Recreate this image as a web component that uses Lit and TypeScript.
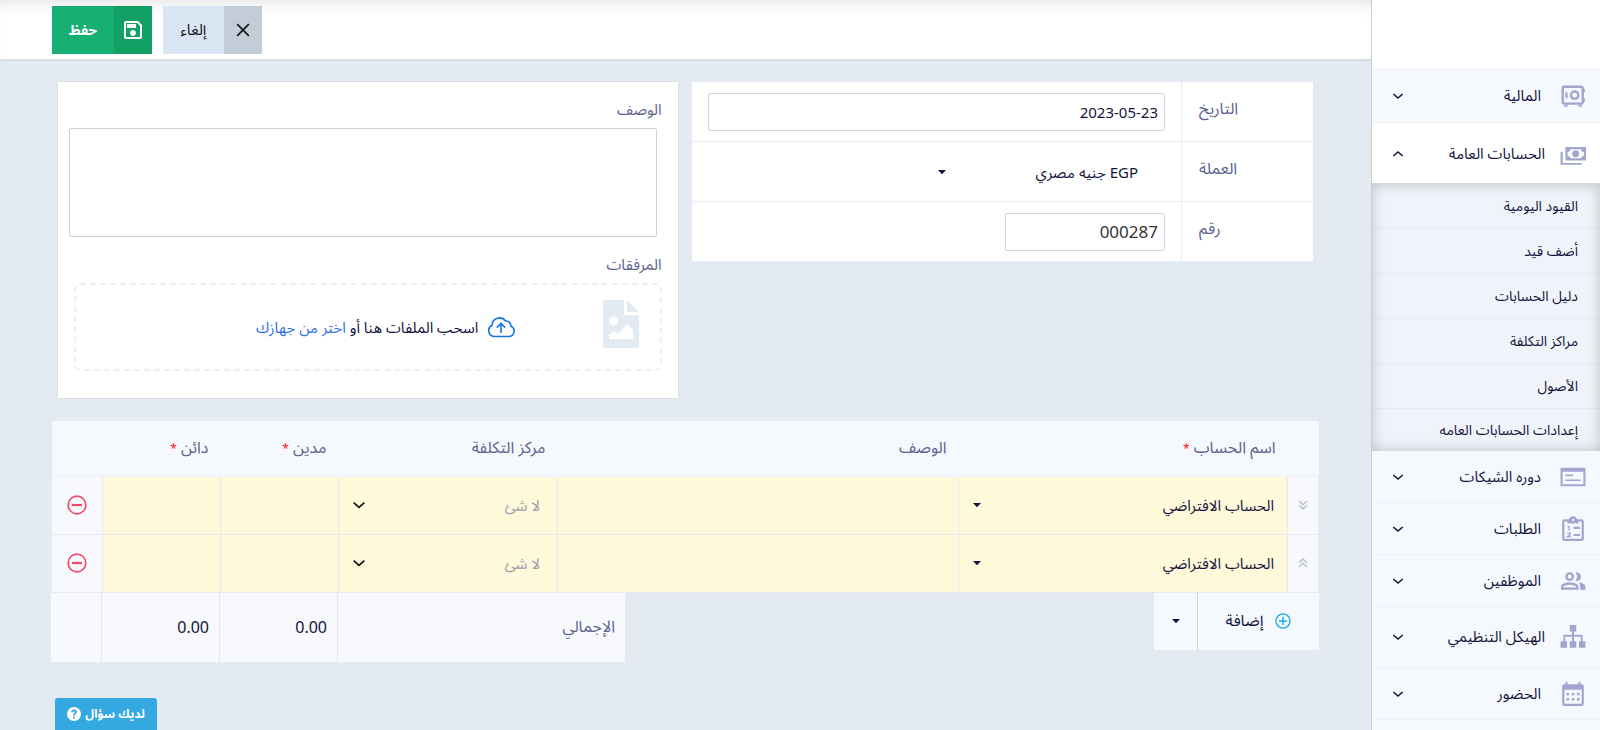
import { LitElement, html, css, svg } from "lit";
import { customElement } from "lit/decorators.js";
import { classMap } from "lit/directives/class-map.js";

const stroke = (d: string, w = 2) => svg`<path d=${d} fill="none" stroke="currentColor" stroke-width=${w}></path>`;
const fill = (d: string) => svg`<path d=${d} fill="currentColor" fill-rule="evenodd"></path>`;

const icons = {
  safe: svg`<rect x="2.5" y="3.5" width="18.5" height="15.5" rx="1.5" fill="none" stroke="currentColor" stroke-width="2.2"></rect>
    <circle cx="13.5" cy="11.3" r="3.4" fill="none" stroke="currentColor" stroke-width="2.2"></circle>
    ${fill("M5 8.5h2v5.500h-2zM4 20h3v2H4zM17 20h3v2h-3zM21.500 5.500h1.500v3h-1.500zM21.500 14h1.500v3h-1.500z")}`,
  cash: fill("M5 5.500H24V18H5V5.500M14.500 8.500A3.200 3.200 0 0 1 14.500 15A3.200 3.200 0 0 1 14.500 8.500M9.500 7.500A2 2 0 0 1 7 10V14A2 2 0 0 1 9.500 16H19.500A2 2 0 0 1 22 14V10A2 2 0 0 1 19.500 7.500H9.500M.5 10H2.500V20.200H20V22H.5V10Z"),
  cheque: fill("M.5 3.500H23.500V20.500H.5V3.500M2.400 7.200V18.600H21.600V7.200H2.400M5 9.600h7v1.800H5zM5 14.200h14v1.400H5z"),
  clipboard: svg`${fill("M4 3H8.200A4 4 0 0 1 15.800 3H20A2 2 0 0 1 22 5V21A2 2 0 0 1 20 23H4A2 2 0 0 1 2 21V5A2 2 0 0 1 4 3M4 5V21H20V5H17V7H7V5H4M12 2.600A1 1 0 0 0 12 4.600A1 1 0 0 0 12 2.600M12.500 10h6v2h-6zM12.500 16.500h6v2h-6z")}
    ${stroke("M7 9.800H8.500V13.500M6.600 15.800H9.500V17.200L7 19H10", 1.2)}`,
  people: svg`<circle cx="9" cy="8" r="3" fill="none" stroke="currentColor" stroke-width="2.2"></circle>
    ${stroke("M2 19V17.600C2 15.400 6 14.300 9 14.300S16 15.400 16 17.600V19Z", 2.2)}
    ${fill("M14.200 4.200A4 4 0 1 1 14.200 11.800A6 6 0 0 0 14.200 4.200M17.300 13.200C20 13.700 23.500 14.900 23.500 17.300V20H18.600V17.400C18.600 15.600 18.200 14.400 17.300 13.200")}`,
  sitemap: fill("M9 1H15V7H12.900V10H20.900V16H23.500V22H17.500V16H19.200V11.700H12.900V16H15V22H9V16H11.100V11.700H4.800V16H6.500V22H.5V16H3.100V10H11.100V7H9Z"),
  calendar: fill("M5 1H7V3H17V1H19V3H20A2 2 0 0 1 22 5V21A2 2 0 0 1 20 23H4A2 2 0 0 1 2 21V5A2 2 0 0 1 4 3H5ZM4 8V21H20V8ZM6 11h2.400v2.200H6zM10.800 11h2.400v2.200h-2.400zM15.600 11H18v2.200h-2.400zM6 15.800h2.400V18H6zM10.800 15.800h2.400V18h-2.400zM15.600 15.800H18V18h-2.400z"),
  save: fill("M17 3H5C3.890 3 3 3.900 3 5V19C3 20.100 3.890 21 5 21H19C20.100 21 21 20.100 21 19V7L17 3M19 19H5V5H16.170L19 7.830V19M12 12C10.340 12 9 13.340 9 15S10.340 18 12 18 15 16.660 15 15 13.660 12 12 12M6 6H15V10H6V6Z"),
  close: stroke("M5 5L19 19M19 5L5 19", 1.9),
  down: stroke("M4 8.500L12 15.500L20 8.500", 2.6),
  up: stroke("M4 15.500L12 8.500L20 15.500", 2.4),
  caret: fill("M4 8H20L12 16.500Z"),
  twoDown: stroke("M4 4L12 11.500L20 4M4 12.500L12 20L20 12.500", 2.8),
  twoUp: stroke("M4 11.500L12 4L20 11.500M4 20L12 12.500L20 20", 2.8),
  minus: svg`<circle cx="12" cy="12" r="10.6" fill="none" stroke="currentColor" stroke-width="2"></circle>${stroke("M6 12H18", 2.6)}`,
  plus: svg`<circle cx="12" cy="12" r="10.6" fill="none" stroke="currentColor" stroke-width="2"></circle>${stroke("M6 12H18M12 6V18", 2.2)}`,
  help: fill("M12 0A12 12 0 1 0 12 24A12 12 0 1 0 12 0ZM10.400 16.600H13.600V19.800H10.400ZM7 8.800C7.200 6 9 4.400 12 4.400C15 4.400 17 6 17 8.700C17 11.600 13.800 11.800 13.600 14.800H10.400C10.400 11 13.600 10.800 13.600 8.900C13.600 7.800 13 7.200 12 7.200C10.900 7.200 10.300 7.900 10.200 9.200Z"),
};

const icon = (name: keyof typeof icons, cls: string) =>
  html`<svg class="icon ${cls}" viewBox="0 0 24 24" aria-hidden="true">${icons[name]}</svg>`;

interface NavItem {
  label: string;
  icon: keyof typeof icons;
  size?: "first" | "tall";
  children?: string[];
}

const NAV: NavItem[] = [
  { label: "المالية", icon: "safe", size: "first" },
  {
    label: "الحسابات العامة",
    icon: "cash",
    size: "tall",
    children: ["القيود اليومية", "أضف قيد", "دليل الحسابات", "مراكز التكلفة", "الأصول", "إعدادات الحسابات العامه"],
  },
  { label: "دوره الشيكات", icon: "cheque" },
  { label: "الطلبات", icon: "clipboard" },
  { label: "الموظفين", icon: "people" },
  { label: "الهيكل التنظيمي", icon: "sitemap", size: "tall" },
  { label: "الحضور", icon: "calendar" },
];

const shared = css`
  :host {
    display: block;
    font-family: "Noto Sans", "Noto Sans Arabic", "DejaVu Sans", sans-serif;
    font-size: 16px;
    color: #14143c;
  }
  * {
    box-sizing: border-box;
  }
  button,
  input,
  select,
  textarea {
    font: inherit;
    color: inherit;
    margin: 0;
    border: 0;
    border-radius: 0;
    background: none;
    padding: 0;
  }
  a {
    color: inherit;
    text-decoration: none;
  }
  .icon {
    display: block;
    flex: none;
    width: 24px;
    height: 24px;
  }
  .s12 {
    width: 12px;
    height: 12px;
  }
  .s14 {
    width: 14px;
    height: 14px;
  }
  .s16 {
    width: 16px;
    height: 16px;
  }
  .s20 {
    width: 20px;
    height: 20px;
  }
`;

@customElement("side-nav")
export class SideNav extends LitElement {
  static styles = [
    shared,
    css`
      :host {
        background: #f5f9fd;
        border-left: 1px solid #c9ccd2;
      }
      .logo {
        height: 68px;
        background: #fff;
      }
      .item {
        display: flex;
        align-items: center;
        width: 100%;
        height: 52px;
        padding: 0 14px 0 19px;
        border-bottom: 1px solid #eef1f5;
        font-size: 15px;
        cursor: pointer;
      }
      .first {
        height: 55px;
        padding-top: 2px;
      }
      .tall {
        height: 61px;
      }
      .open {
        padding-top: 2px;
        background: #fff;
        border-color: #d5d8dd;
      }
      .item .main {
        width: 26px;
        height: 26px;
        color: #a2a6cf;
      }
      .text {
        flex: 1;
        padding-right: 19px;
        text-align: right;
      }
      .tall .text {
        padding-right: 15px;
      }
      .sub {
        margin: 0;
        padding: 0;
        list-style: none;
        background: #f0f4fa;
        box-shadow: inset 0 0 14px rgba(0, 0, 0, 0.22);
      }
      .sub a {
        display: flex;
        align-items: center;
        height: 45px;
        padding: 0 22px;
        font-size: 14px;
        border-bottom: 1px solid rgba(0, 0, 0, 0.04);
      }
      .sub li:last-child a {
        height: 42px;
        border: 0;
      }
    `,
  ];

  render() {
    return html`
      <div class="logo"></div>
      <nav>
        ${NAV.map(
          (n) => html`
            <button
              class="item ${classMap({ first: n.size === "first", tall: n.size === "tall", open: !!n.children })}"
              aria-expanded=${n.children ? "true" : "false"}
            >
              ${icon(n.icon, "main")}
              <span class="text">${n.label}</span>
              ${icon(n.children ? "up" : "down", "s14")}
            </button>
            ${n.children
              ? html`<ul class="sub">
                  ${n.children.map((c) => html`<li><a href="#">${c}</a></li>`)}
                </ul>`
              : ""}
          `
        )}
      </nav>
    `;
  }
}

@customElement("app-root")
export class AppRoot extends LitElement {
  static styles = [
    shared,
    css`
      .page {
        display: grid;
        grid-template-columns: 229px minmax(0, 1fr);
        height: 100vh;
        overflow: hidden;
        background: #e3eaf2;
      }
      .topbar {
        display: flex;
        justify-content: flex-end;
        gap: 11px;
        padding: 6px 52px 5px;
        background: #fff;
        border-bottom: 2px solid #d9dee6;
        box-shadow: inset 0 12px 16px -10px rgba(0, 0, 0, 0.12);
      }
      .btn {
        display: flex;
        height: 48px;
        cursor: pointer;
        font-size: 15px;
      }
      .btn-icon {
        display: grid;
        place-items: center;
        width: 38px;
        height: 100%;
      }
      .btn-text {
        display: grid;
        place-items: center;
        width: 61px;
        height: 100%;
      }
      .cancel {
        background: #d9e5f2;
        color: #111;
      }
      .cancel .btn-icon {
        background: #c3cdd8;
      }
      .save {
        background: #15b072;
        color: #fff;
        font-size: 14px;
        font-weight: 700;
      }
      .save .btn-text {
        width: 62px;
      }
      .save .btn-icon {
        background: #12a065;
      }
      .content {
        padding: 20px 52px 0 51px;
      }
      .cards {
        display: grid;
        grid-template-columns: 1fr 1fr;
        align-items: start;
        gap: 13px;
        padding: 0 6px;
      }
      .fields {
        margin-top: 1px;
        background: #fff;
      }
      .field {
        display: grid;
        grid-template-columns: 132px minmax(0, 1fr);
        min-height: 60px;
        border-bottom: 1px solid #e8ecf1;
      }
      .field label {
        padding: 10px 0 0 17px;
        text-align: left;
        color: #5d618f;
        border-left: 1px solid #e8ecf1;
      }
      .value {
        display: flex;
        align-items: center;
        padding: 0 16px;
        font-size: 15px;
      }
      .box {
        height: 38px;
        padding: 0 6px;
        border: 1px solid #d3d6de;
        border-radius: 2px;
        background: #fff;
        text-align: right;
      }
      .date {
        width: 100%;
      }
      .number {
        width: 160px;
        font-size: 17px;
        color: #333;
      }
      .pick {
        display: flex;
        align-items: center;
        position: relative;
        width: 100%;
        font-size: 15px;
      }
      .pick select {
        width: 100%;
        height: 56px;
        line-height: 32px;
        appearance: none;
        outline: 0;
      }
      .pick .icon {
        position: absolute;
        left: 12px;
        pointer-events: none;
      }
      .currency {
        width: 244px;
      }
      .currency select {
        padding-right: 27px;
        height: 58px;
      }
      .currency .icon {
        left: 15px;
      }
      .notes {
        display: flex;
        flex-direction: column;
        padding: 15px 16px 27px 11px;
        background: #fff;
        border: 1px solid #dadfe6;
        color: #5d618f;
        font-size: 15px;
        line-height: 24px;
      }
      .notes textarea {
        height: 109px;
        margin: 7px 5px 15px 0;
        border: 1px solid #cdd1da;
        border-radius: 2px;
        resize: none;
      }
      .drop {
        display: flex;
        align-items: center;
        height: 88px;
        margin: 7px 0 0 5px;
        padding: 0 21px;
        border: 2px dashed #eceff4;
        border-radius: 6px;
        color: #14143c;
      }
      .drop-text {
        flex: 1;
        display: flex;
        align-items: center;
        justify-content: center;
        gap: 9px;
        padding-left: 72px;
      }
      .drop-text span {
        flex: none;
      }
      .drop-text a {
        color: #2d6fe8;
      }
      .file {
        width: 36px;
        height: 48px;
        color: #e3eaf2;
        margin-bottom: 6px;
      }
      .cloud {
        width: 28px;
        height: 22px;
        color: #1473e6;
      }
      .drop-text,
      .drop-text .cloud {
        flex-shrink: 0;
      }
      table {
        width: 100%;
        margin-top: 22px;
        border-collapse: collapse;
        table-layout: fixed;
      }
      th,
      td {
        padding: 0;
        text-align: right;
        font-weight: 400;
      }
      th {
        height: 55px;
        padding-right: 12px;
        background: #f5f9fd;
        color: #5d618f;
        border-bottom: 1px solid #eceff4;
      }
      .req {
        color: #ff1010;
        font-size: 12px;
      }
      td {
        height: 58px;
        background: #fff8db;
        border: 1px solid #e6eaf0;
      }
      td.side {
        background: #f7f9fd;
      }
      td input {
        display: block;
        width: 100%;
        height: 56px;
        outline: 0;
      }
      td select {
        padding-right: 13px;
      }
      td .cost {
        color: #9b9ca8;
        padding-right: 17px;
      }
      td .black {
        color: #111;
      }
      .move {
        color: #b9bdd0;
        margin: auto;
      }
      .del {
        display: grid;
        place-items: center;
        width: 100%;
        height: 56px;
        color: #f7476b;
      }
      .c-move {
        width: 31px;
      }
      .c-account {
        width: 329px;
      }
      .c-cost {
        width: 219px;
      }
      .c-num {
        width: 118px;
      }
      .c-del {
        width: 51px;
      }
      .under {
        display: flex;
        justify-content: space-between;
        align-items: flex-start;
      }
      .add {
        display: flex;
        height: 57px;
        background: #f5f9fd;
      }
      .add-main {
        display: flex;
        align-items: center;
        justify-content: center;
        gap: 12px;
        width: 122px;
        border-left: 1px solid #cdd2d9;
      }
      .add-main .icon {
        color: #14aaf0;
      }
      .add-more {
        display: grid;
        place-items: center;
        width: 43px;
      }
      .totals {
        display: flex;
        background: #f7f9fd;
      }
      .totals span {
        display: flex;
        align-items: center;
        width: 118px;
        height: 69px;
        padding-right: 10px;
        border-right: 1px solid #e3e7ed;
      }
      .totals .t-label {
        width: 287px;
        border: 0;
        color: #5d618f;
      }
      .totals .t-end {
        width: 51px;
      }
      .help {
        position: fixed;
        left: 55px;
        bottom: 0;
        display: flex;
        align-items: center;
        justify-content: center;
        gap: 4px;
        width: 102px;
        height: 32px;
        background: #34a8e0;
        color: #fff;
        border-radius: 3px 3px 0 0;
        font-size: 12px;
        font-weight: 700;
      }
    `,
  ];

  private row(move: "twoDown" | "twoUp") {
    return html`
      <tr>
        <td class="side">${icon(move, "s12 move")}</td>
        <td>
          <div class="pick">
            <select aria-label="اسم الحساب"><option>الحساب الافتراضي</option></select>
            ${icon("caret", "s12")}
          </div>
        </td>
        <td><input type="text" aria-label="الوصف" /></td>
        <td>
          <div class="pick">
            <select class="cost" aria-label="مركز التكلفة"><option>لا شئ</option></select>
            ${icon("down", "s16 black")}
          </div>
        </td>
        <td><input type="text" aria-label="مدين" /></td>
        <td><input type="text" aria-label="دائن" /></td>
        <td class="side"><button class="del" aria-label="حذف">${icon("minus", "s20")}</button></td>
      </tr>
    `;
  }

  render() {
    return html`
      <div class="page" dir="rtl">
        <side-nav></side-nav>
        <main>
          <header class="topbar">
            <button class="btn cancel">
              <span class="btn-icon">${icon("close", "s20")}</span><span class="btn-text">إلغاء</span>
            </button>
            <button class="btn save">
              <span class="btn-icon">${icon("save", "")}</span><span class="btn-text">حفظ</span>
            </button>
          </header>
          <div class="content">
            <div class="cards">
              <section class="fields">
                <div class="field">
                  <label for="date">التاريخ</label>
                  <div class="value"><input id="date" class="box date" type="text" .value=${"2023-05-23"} /></div>
                </div>
                <div class="field">
                  <label for="currency">العملة</label>
                  <div class="value">
                    <div class="pick currency">
                      <select id="currency"><option>EGP جنيه مصري</option></select>
                      ${icon("caret", "s12")}
                    </div>
                  </div>
                </div>
                <div class="field">
                  <label for="number">رقم</label>
                  <div class="value"><input id="number" class="box number" type="text" .value=${"000287"} /></div>
                </div>
              </section>
              <section class="notes">
                <label for="notes">الوصف</label>
                <textarea id="notes"></textarea>
                <span>المرفقات</span>
                <div class="drop">
                  <svg class="file" viewBox="0 0 36 48" aria-hidden="true">
                    <path
                      fill="currentColor"
                      fill-rule="evenodd"
                      d="M2 0H21V15H36V46A2 2 0 0 1 34 48H2A2 2 0 0 1 0 46V2A2 2 0 0 1 2 0ZM24 0L36 12H24ZM10.500 16.500A4.500 4.500 0 1 0 10.500 25.500A4.500 4.500 0 1 0 10.500 16.500ZM6 39H30V30L24 24L15 34L11 31L6 35Z"
                    ></path>
                  </svg>
                  <div class="drop-text">
                    <svg class="cloud" viewBox="0 0 28 22" aria-hidden="true">
                      <path
                        fill="none"
                        stroke="currentColor"
                        stroke-width="1.600"
                        d="M7 20.500A6 6 0 0 1 5 9.200A7.500 7.500 0 0 1 18.500 5A5 5 0 0 1 24 10.200A5.400 5.400 0 0 1 22 20.500ZM14 17V8M9.800 11.600L14 7.400L18.200 11.600"
                      ></path>
                    </svg>
                    <span>اسحب الملفات هنا أو <a href="#">اختر من جهازك</a></span>
                  </div>
                </div>
              </section>
            </div>
            <table>
              <colgroup>
                <col class="c-move" />
                <col class="c-account" />
                <col />
                <col class="c-cost" />
                <col class="c-num" />
                <col class="c-num" />
                <col class="c-del" />
              </colgroup>
              <thead>
                <tr>
                  <th></th>
                  <th>اسم الحساب <span class="req">*</span></th>
                  <th>الوصف</th>
                  <th>مركز التكلفة</th>
                  <th>مدين <span class="req">*</span></th>
                  <th>دائن <span class="req">*</span></th>
                  <th></th>
                </tr>
              </thead>
              <tbody>
                ${this.row("twoDown")} ${this.row("twoUp")}
              </tbody>
            </table>
            <div class="under">
              <div class="add">
                <button class="add-main">${icon("plus", "s16")}<span>إضافة</span></button>
                <button class="add-more" aria-label="المزيد">${icon("caret", "s12")}</button>
              </div>
              <div class="totals">
                <span class="t-label">الإجمالي</span><span>0.00</span><span>0.00</span><span class="t-end"></span>
              </div>
            </div>
          </div>
        </main>
        <button class="help"><span>لديك سؤال</span>${icon("help", "s14")}</button>
      </div>
    `;
  }
}
